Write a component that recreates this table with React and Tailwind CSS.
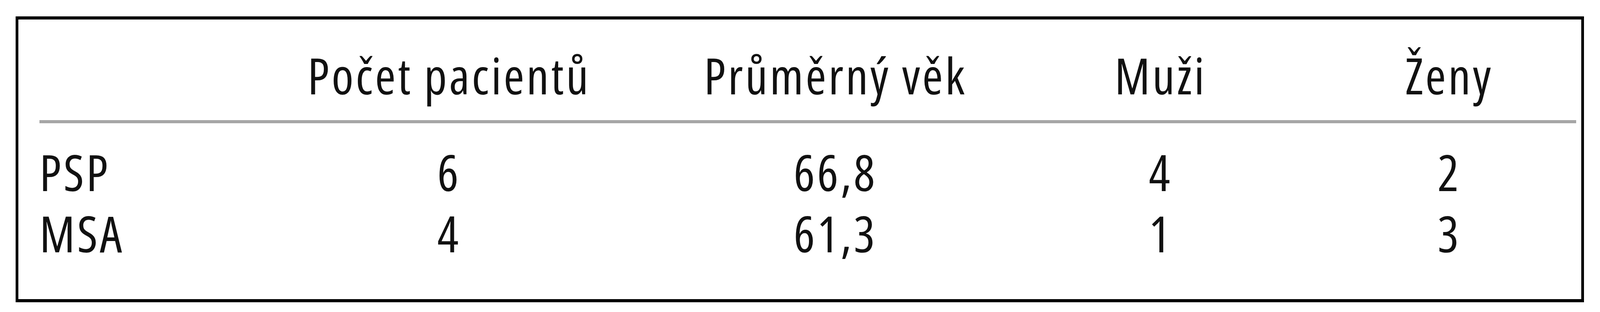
import React from "react";

// the window is 4096 wide, so every horizontal value is the reference's times 0.808
const rows = [
  { name: "PSP", count: "6", age: "66,8", men: "4", women: "2" },
  { name: "MSA", count: "4", age: "61,3", men: "1", women: "3" },
];

const cols = "grid grid-cols-[478px_1141px_837px_828px_650px]";

const App = () => {
  return (
    <div className="bg-white w-full h-[800px] pt-[42px] pl-[40px] font-['Open_Sans',sans-serif] font-stretch-[75%] tracking-[5.5px] text-[128px] leading-[157px] text-[#111]">
      <div className="w-[4015px] h-[733px] border-y-[8px] border-x-[7px] border-black pl-[54px] pr-[13px] pt-[64px]">
        <div className={`${cols} pb-[37px] border-b-[8px] border-[#a6a6a6]`}>
          <div></div>
          <div className="text-center">Počet pacientů</div>
          <div className="text-center">Průměrný věk</div>
          <div className="text-center">Muži</div>
          <div className="text-center">Ženy</div>
        </div>
        <div className="pt-[46px]">
          {rows.map((r) => (
            <div key={r.name} className={cols}>
              <div>{r.name}</div>
              <div className="text-center">{r.count}</div>
              <div className="text-center">{r.age}</div>
              <div className="text-center">{r.men}</div>
              <div className="text-center">{r.women}</div>
            </div>
          ))}
        </div>
      </div>
    </div>
  );
};

export default App;
